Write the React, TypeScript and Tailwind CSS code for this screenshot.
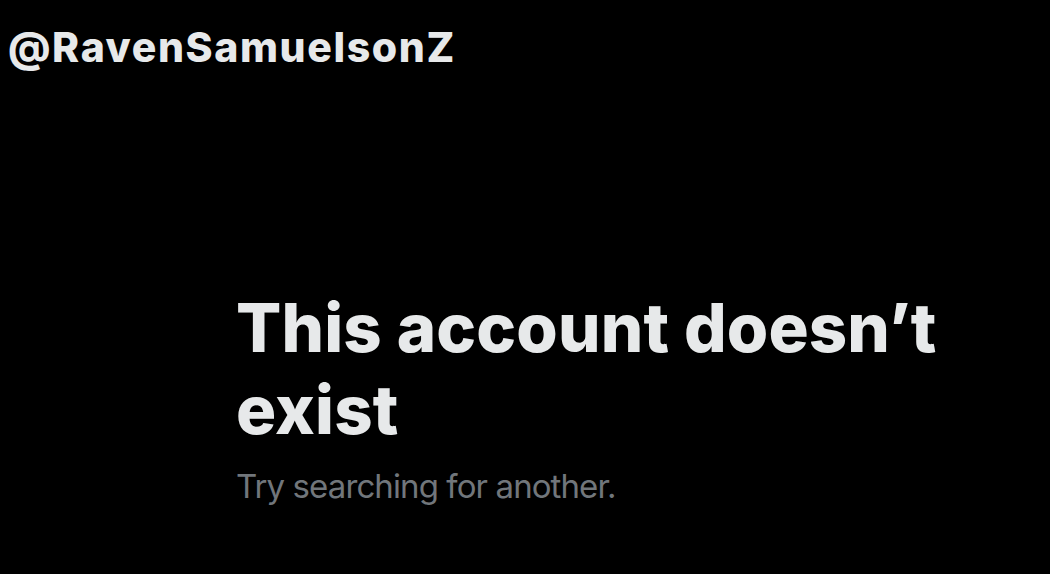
import React from 'react';

export default function App() {
  return (
    <div className="min-h-[574px] w-full bg-black text-[#e7e9ea] font-['Inter','Noto_Sans',sans-serif] overflow-hidden">
      <div className="pl-[8px] pt-[23px] text-[41px] leading-[48px] font-extrabold tracking-[1.6px]">
        @RavenSamuelsonZ
      </div>
      <div className="pl-[236px] pt-[216px]">
        <h1 className="w-[760px] text-[67px] leading-[82px] font-extrabold tracking-[0.15px]">
          This account doesn’t exist
        </h1>
        <p className="mt-[15px] text-[33px] leading-[40px] text-[#71767b] tracking-[-0.9px]">
          Try searching for another.
        </p>
      </div>
    </div>
  );
}
